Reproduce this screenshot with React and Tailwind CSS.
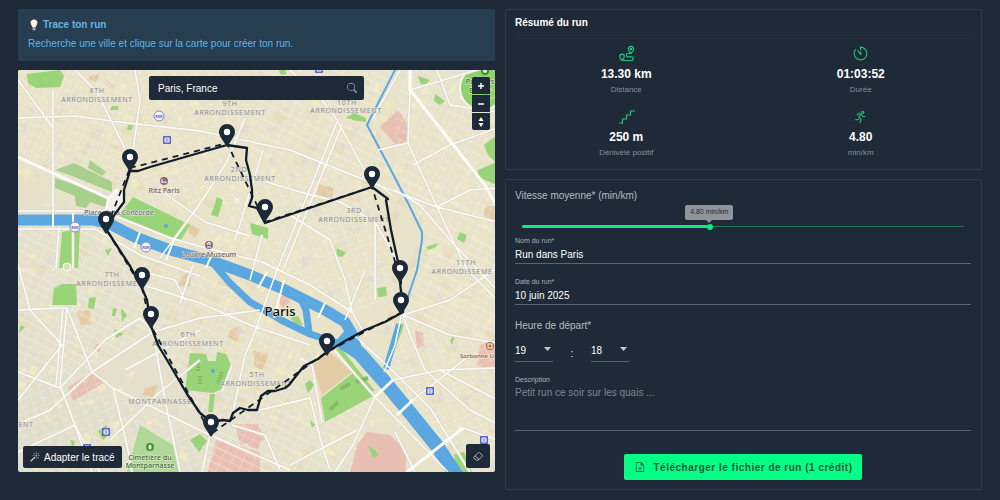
import { useState } from "react"
import { BsEraser, BsMagic, BsSearch } from "react-icons/bs"
import { IoTimerOutline } from "react-icons/io5"
import { LiaRunningSolid } from "react-icons/lia"
import { PiFileArrowDown } from "react-icons/pi"

const ROADS = [
    "M18 157L110 199", "M18 118L75 116L120 122L200 131L290 150L370 182L437 207L497 222", "M53 90V226", "M75 70L97 92L128 155L131 172",
    "M18 80L53 128L53 160", "M135 70L140 100L131 165", "M73 224V268", "M59 226L56 268", "M18 211H108", "M18 229H95L140 255L200 276",
    "M110 214L170 238L210 249L262 262L310 285L352 312L366 336", "M160 258L197 208L227 162L245 118", "M160 190L205 222L250 236",
    "M337 122L277 270L250 345", "M342 125L283 270", "M337 120L367 175L392 195", "M337 120L322 100L290 70", "M263 150L235 240",
    "M408 143L437 207L467 270L497 300", "M410 90L497 64", "M410 90L408 143L378 150", "M413 165L450 145L497 128",
    "M437 207L470 190L497 188", "M395 190L420 205L450 240L497 290", "M250 177L300 192L340 202L375 222L398 262", "M290 215L330 240L345 280L352 312",
    "M375 222L375 300", "M18 310L60 308L67 308", "M67 308L60 385", "M63 308L56 385", "M67 308L92 372L113 388L210 435L290 470", "M18 372L60 388L105 340L140 318L153 332",
    "M18 265L30 310L62 345L18 400", "M92 372L153 332L200 318L260 310", "M92 372L50 410L18 424", "M60 385L92 472", "M113 388L127 445L132 472",
    "M153 332L165 400L180 472", "M143 285L200 303L250 325L310 345", "M135 270L175 280L185 300", "M110 440L160 392L200 360", "M18 452L75 425L100 472",
    "M233 412L245 355L258 325", "M210 435L202 472", "M232 365L222 392", "M260 410L310 398L322 445L330 470", "M290 465L357 430", "M322 422L312 365L300 358",
    "M280 470L265 435L232 425", "M334 350L375 397L405 428L448 472", "M355 336L395 373L430 408L470 472", "M375 397L353 445L335 472",
    "M375 397L393 380L440 370L497 368", "M407 472L463 428L497 440", "M397 415L413 400L470 355", "M403 315L450 335L497 343", "M403 315L410 335L425 370L470 410L497 424",
    "M403 315L450 300L497 268", "M402 312L395 345L384 372", "M440 370L497 400", "M395 432L415 472", "M365 270L345 320", "M250 280L262 235",
    "M180 303L193 265", "M125 370L200 330", "M400 70L372 120", "M437 70L450 105L497 112",
]

// [clip polygon, pattern id]
const DISTRICTS = [
    ["18,70 140,70 131,170 110,199 18,157", "gridA"], ["140,70 260,70 245,118 197,208 160,250 131,190", "gridB"],
    ["260,70 400,70 367,125 392,172 370,182 245,150", "gridC"], ["245,150 370,182 395,300 352,312 262,262 200,240", "gridB"],
    ["400,70 497,70 497,222 437,207 392,172", "gridA"], ["392,172 497,222 497,343 403,315 422,235", "gridC"],
    ["18,229 95,229 142,270 160,330 92,372 18,372", "gridC"], ["142,260 210,275 310,345 300,420 211,435 150,330", "gridA"],
    ["18,372 92,372 210,435 202,472 18,472", "gridB"], ["211,435 322,400 375,397 350,472 202,472", "gridC"],
    ["403,315 497,343 497,472 448,472 384,372", "gridB"],
]

const GREENS = [
    "27,74 60,70 64,76 60,87 36,88 28,83", "190,353 206,354 208,361 216,361 217,352 226,354 232,367 223,388 213,393 185,390",
    "133,197 190,225 180,242 118,217", "353,373 375,395 325,422 321,398", "210,394 215,394 213,412 208,412", "62,232 80,228 78,268 59,268",
    "54,288 62,284 76,284 77,305 52,305", "89,298 96,297 94,309 88,308", "217,197 223,200 218,217 211,215", "112,106 118,106 118,110 110,110",
    "128,125 133,125 132,130 127,130", "113,308 117,309 115,316 112,316", "121,308 127,315 122,322", "114,329 124,334 116,338",
    "112,248 108,256 105,250", "377,288 386,287 387,296 378,297", "250,223 268,228 268,239 252,234", "418,76 430,80 425,85 420,83",
    "435,94 445,101 440,105 434,101", "352,112 366,118 366,122 352,120", "460,232 467,235 464,243 457,239", "337,248 346,253 342,257 336,256",
    "484,145 497,135 497,164 488,155", "478,170 497,162 497,185 478,177", "345,118 357,112 358,120", "98,431 106,425 111,433 103,440",
    "454,454 464,452 472,472 457,472", "368,446 375,450 379,455 373,458", "305,384 310,380 314,385 308,393", "190,440 200,434 207,441 199,452",
    "399,322 404,325 392,358 387,367", "426,247 438,243 436,247 428,250", "20,325 25,327 19,333", "450,340 455,335 452,345", "279,70 284,68 287,74 281,75",
    "340,347 375,391 370,391 336,349", "290,318 298,316 303,325 296,324", "205,247 212,248 210,252", "310,420 315,425 312,428", "70,440 75,441 73,448",
]

const SOFT_GREENS = ["55,170 74,163 112,182 112,192 72,176", "55,178 108,196 105,207 90,202 86,208 76,206 75,196 55,188", "90,160 106,172 102,176 88,168"]

const PINKS = [
    "68,387 92,372 105,382 73,401", "380,127 398,110 410,127 406,144 396,145", "367,432 390,435 407,452 405,472 350,472 357,445",
    "480,345 497,338 497,370 477,366", "216,440 260,452 260,472 208,472", "235,424 258,424 265,440 240,445", "415,330 423,333 424,345 417,348",
    "278,298 287,293 290,302 282,308", "95,345 101,343 100,352 94,350", "210,463 222,466 218,472 208,472", "250,432 262,436 258,450 248,446",
]

const TANS = ["313,365 330,352 352,372 322,395", "76,312 91,310 90,325 81,325", "318,184 334,188 331,199 316,194", "229,330 240,326 236,342 228,338", "253,350 269,355 263,370 255,367", "180,278 192,270 190,287 178,286", "90,76 100,74 96,82 88,80", "145,388 158,385 153,397 143,395", "485,207 497,205 495,225 484,215", "190,224 200,230 195,238 188,232"]

const LABELS = [
    [97, 93, "8TH"], [97, 102, "ARRONDISSEMENT"], [230, 106, "9TH"], [230, 115, "ARRONDISSEMENT"], [239, 172, "2ND"], [240, 181, "ARRONDISSEMENT"],
    [347, 105, "10TH"], [346, 113, "ARRONDISSEMENT"], [354, 213, "3RD"], [354, 222, "ARRONDISSEMENT"], [466, 265, "11TH"], [462, 274, "ARRONDISSEME"],
    [112, 277, "7TH"], [112, 286, "ARRONDISSEMENT"], [188, 337, "6TH"], [188, 346, "ARRONDISSEMENT"], [257, 377, "5TH"], [256, 386, "ARRONDISSEMENT"],
    [160, 404, "MONTPARNASSE"], [26, 427, "ENT"],
]

const ROUTE = "M130 171L138 171L150 167L185 157L227 145L247 148L246 160L250 175L252 190L252 198L249 206L257 208L265 223L372 187L388 199L386 200L391 230L398 262L400 282L403 312L385 322L365 330L345 341L327 352L318 359L310 363L304 366L296 376L289 385L285 388L275 391L268 391L261 396L257 410L248 410L240 408L233 413L230 421L223 420L211 422L200 413L187 394L170 365L158 345L151 326L147 300L142 288L130 266L106 229L115 214L124 202L124 190L130 171"
const DIRECT = "M130 168L227 143L265 222L372 187L401 281L402 312L327 352L211 434L151 326L142 288L106 229L130 168"
const PINS = [[227, 132], [130, 157], [265, 207], [372, 174], [106, 219], [400, 268], [401, 300], [327, 341], [142, 275], [151, 314], [211, 422]]
const RER = [[159, 116], [75, 227], [146, 247]]
const METRO = [[167, 140], [319, 69], [106, 432], [87, 448], [430, 391], [484, 440]]

// Small building blocks spread over the districts, always the same ones
const BLOCKS = Array.from({ length: 620 }, (_, i) => ({
    x: 18 + ((i * 137.5) % 477),
    y: 70 + ((i * 71.3 + (i % 7) * 19) % 402),
    w: 4 + (i % 5) * 2,
    h: 3 + (i % 4) * 2,
    r: (i * 31) % 60,
    fill: ["#f1eac6", "#e0dcd0", "#efe7c3", "#e6e2d0", "#e7ddbe"][i % 5],
}))

const ParisMap = () => (
    <svg viewBox="18 70 477 402" preserveAspectRatio="xMidYMid slice" className="block h-full w-full" role="img" aria-label="Carte de Paris">
        <defs>
            <pattern id="gridA" width="13" height="9" patternUnits="userSpaceOnUse" patternTransform="rotate(24)">
                <path d="M0 0H13M0 0V9M6 0V4" stroke="#f8f7f0" strokeWidth="1" fill="none" />
            </pattern>
            <pattern id="gridB" width="11" height="14" patternUnits="userSpaceOnUse" patternTransform="rotate(-22)">
                <path d="M0 0H11M0 0V14M0 8H5" stroke="#f8f7f0" strokeWidth="1" fill="none" />
            </pattern>
            <pattern id="gridC" width="15" height="10" patternUnits="userSpaceOnUse" patternTransform="rotate(-64)">
                <path d="M0 0H15M0 0V10M8 0V10" stroke="#f8f7f0" strokeWidth="1" fill="none" />
            </pattern>
            <linearGradient id="land" x1="0" y1="1" x2="1" y2="0">
                <stop offset="0" stopColor="#e0ddce" />
                <stop offset="0.5" stopColor="#e9e3c9" />
                <stop offset="1" stopColor="#e7e2ca" />
            </linearGradient>
        </defs>
        <rect x="18" y="70" width="477" height="402" fill="url(#land)" />
        {BLOCKS.map((b, i) => (
            <rect key={i} x={b.x} y={b.y} width={b.w} height={b.h} fill={b.fill} transform={`rotate(${b.r} ${b.x} ${b.y})`} />
        ))}
        {TANS.map((p) => <polygon key={p} points={p} fill="#e3cba6" />)}
        {PINKS.map((p) => <polygon key={p} points={p} fill="#e8bfb2" />)}
        {DISTRICTS.map(([points, id]) => <polygon key={points} points={points} fill={`url(#${id})`} opacity="0.55" />)}
        {SOFT_GREENS.map((p) => <polygon key={p} points={p} fill="#a8cf8b" />)}
        {GREENS.map((p) => <polygon key={p} points={p} fill="#99d479" />)}
        <polygon points="140,425 173,445 181,472 127,472" fill="#b1d898" />
        <circle cx="482" cy="88" r="23" fill="#f7f5ec" />
        <circle cx="482" cy="88" r="21" fill="#8fd26b" />
        <path d="M466 78C476 90 488 84 495 92M474 104C480 96 488 100 495 97" stroke="#c9e6b0" fill="none" />
        <circle cx="485" cy="92" r="4" fill="#6fc08b" />
        <path d="M340 389L350 384M356 382L368 378M330 410L338 402" stroke="#83bd66" strokeWidth="4" />
        <path d="M198 363V372M200 376V384M222 372L218 384" stroke="#83bd66" strokeWidth="4" strokeDasharray="2 1" />
        <circle cx="213" cy="371" r="2" fill="#5da6d8" />
        <circle cx="166" cy="226" r="2" fill="#5da6d8" />
        <circle cx="136" cy="212" r="2" fill="#5da6d8" />

        <path d={ROADS.join("")} stroke="#dedacb" strokeWidth="3" fill="none" strokeLinejoin="round" />
        <g fill="none" stroke="#5ba7e0" strokeLinejoin="round">
            <path d="M14 220H92L110 224L135 237L170 250L212 261L250 275L283 289L303 299L325 310L345 322L352 334L356 348" strokeWidth="11" />
            <path d="M212 262L230 283L250 302L283 321L310 334L337 343L356 355" strokeWidth="7" />
            <path d="M300 297L306 310L309 332" strokeWidth="7" />
            <path d="M340 336L360 354L383 380L407 409L437 446L457 476" strokeWidth="14" />
            <path d="M396 68L367 125L392 172L409 205L422 232L422 240L417 270L403 312" strokeWidth="2" />
            <path d="M399 324L386 369" strokeWidth="6" />
        </g>
        <path d={ROADS.join("")} stroke="#fdfcf8" strokeWidth="1.5" fill="none" strokeLinejoin="round" />
        <path d="M410 66V90L485 185L497 207M18 157L110 199M375 397L393 380M397 415L413 400M407 472L463 428" stroke="#fdfcf8" strokeWidth="3" fill="none" />
        <path d="M53 213V228M73 213V228M140 232L134 248M174 240L166 260M213 252L206 268M267 272L258 288M284 280L274 318M325 303L318 318" stroke="#fdfcf8" strokeWidth="2" />
        <path d="M108 199L116 190L124 196L118 214L106 211Z" fill="#f3f1e8" stroke="#fdfcf8" strokeWidth="2" />
        <circle cx="237" cy="201" r="2" fill="#eee9d3" stroke="#fdfcf8" />
        <circle cx="67" cy="267" r="4" fill="#d5e6ba" stroke="#fdfcf8" />

        <g fontFamily="'Open Sans', sans-serif" fontSize="7" textAnchor="middle" fill="#7f8598" className="tracking-widest">
            {LABELS.map(([x, y, text]) => (
                <text key={`${x}-${y}`} x={x} y={y} stroke="#ece7d2" strokeWidth="1" paintOrder="stroke">{text}</text>
            ))}
        </g>
        <g fontFamily="'Open Sans', sans-serif" fontSize="7" fontWeight="600" textAnchor="middle" stroke="#f3efdf" strokeWidth="1" paintOrder="stroke">
            <text x="119" y="215" fill="#6d6f7c">Place de la Concorde</text>
            <text x="164" y="193" fill="#7c6370">Ritz Paris</text>
            <text x="209" y="257" fill="#75606a">Louvre Museum</text>
            <text x="477" y="358" fontSize="6" fill="#8b5a3c">Sorbonne U</text>
            <text x="150" y="460" fill="#35702b">Cimetière du</text>
            <text x="150" y="468" fill="#35702b">Montparnasse</text>
            <text x="480" y="84" fill="#35702b">Parc des</text>
            <text x="480" y="93" fill="#35702b">Buttes</text>
        </g>
        <circle cx="164" cy="181" r="4" fill="#8a6b78" />
        <path d="M162 179V183M162 182H166V183" stroke="#fff" fill="none" />
        <circle cx="209" cy="245" r="4" fill="#8a6b78" />
        <path d="M207 247H211M207 244H211L209 242Z" stroke="#fff" fill="none" />
        <circle cx="490" cy="346" r="4" fill="#b06a3a" />
        <rect x="488" y="344" width="4" height="4" fill="none" stroke="#fff" />
        <circle cx="150" cy="447" r="4" fill="#3e9434" />
        <ellipse cx="150" cy="447" rx="1.5" ry="2.5" fill="#e9f4e0" />
        <circle cx="485" cy="71" r="4" fill="#3e8a34" />
        <circle cx="485" cy="71" r="2" fill="#e9f4e0" />
        {RER.map(([x, y]) => (
            <g key={x}>
                <circle cx={x} cy={y} r="5" fill="#f4f3fa" stroke="#8088c8" />
                <text x={x} y={y + 2} fontSize="4" fontWeight="700" fontFamily="'Open Sans', sans-serif" textAnchor="middle" fill="#6069b8">RER</text>
            </g>
        ))}
        {METRO.map(([x, y]) => (
            <g key={x}>
                <rect x={x - 4} y={y - 4} width="8" height="8" rx="1" fill="#5a64c4" />
                <path d={`M${x - 2} ${y + 2}V${y - 2}H${x + 2}V${y + 2}ZM${x - 2} ${y}H${x + 2}`} stroke="#fff" fill="none" />
            </g>
        ))}
        <text x="280" y="316" fontSize="13" fontWeight="600" fontFamily="'Open Sans', sans-serif" textAnchor="middle" fill="#111" stroke="#f3efdf" strokeWidth="1" paintOrder="stroke">Paris</text>

        <path d={DIRECT} stroke="#101d29" strokeWidth="1.8" strokeDasharray="6 5" fill="none" />
        <path d={ROUTE} stroke="#101d29" strokeWidth="2.3" fill="none" strokeLinejoin="round" />
        {PINS.map(([x, y]) => (
            <g key={`${x}-${y}`} transform={`translate(${x} ${y})`}>
                <path d="M0 -8A8 8 0 0 1 8 0C8 5 3 9 1 14Q0 15 -1 14C-3 9 -8 5 -8 0A8 8 0 0 1 0 -8Z" fill="#1c2938" />
                <circle r="3.200" fill="#fff" />
            </g>
        ))}
    </svg>
)

const RouteIcon = ({ className }) => (
    <svg viewBox="-1 -1 17 17" fill="none" stroke="currentColor" strokeWidth="1.2" strokeLinejoin="round" className={className}>
        <path d="M3 14.500C1.500 13 0.700 12 0.700 10.500a2.300 2.300 0 0 1 4.600 0C5.300 12 4.500 13 3 14.500H12.500a1.800 1.800 0 0 0 0-3.600H9a1.700 1.700 0 0 1 0-3.400H12C10.200 5.800 9.400 4.500 9.400 3a2.600 2.600 0 0 1 5.200 0C14.600 4.500 13.800 5.800 12 7.500" />
        <circle cx="12" cy="3" r="0.600" />
    </svg>
)

const StepsIcon = ({ className }) => (
    <svg viewBox="0 0 17 17" fill="none" stroke="currentColor" strokeWidth="1.2" className={className}>
        <path d="M1 15H4.500V11H8.500V7H12.500V3H17" />
    </svg>
)

const Stat = ({ icon: Icon, value, label }) => (
    <div className="flex flex-col items-center">
        <Icon className="size-[17px] text-[#20c77a]" />
        <p className="mt-1 text-[12px] leading-4 font-bold text-white">{value}</p>
        <p className="mt-0.5 text-[8px] leading-3 text-[#84909b]">{label}</p>
    </div>
)

const Field = ({ id, label, value, ...rest }) => (
    <div className="mb-[13px]">
        <label htmlFor={id} className="block text-[7px] leading-[10px] text-[#a9b3bc]">{label}</label>
        <input id={id} defaultValue={value} {...rest} className="block h-[18px] w-full border-b border-[#586672] bg-transparent text-[10px] text-white outline-none" />
    </div>
)

const TimeSelect = ({ label, value, count }) => (
    <div className="relative w-[38px] border-b border-[#586672]">
        <select aria-label={label} defaultValue={value} className="block h-[21px] w-full appearance-none bg-transparent text-[10px] text-white outline-none">
            {Array.from({ length: count }, (_, i) => <option key={i} value={i}>{String(i).padStart(2, "0")}</option>)}
        </select>
        <svg viewBox="0 0 7 4" className="pointer-events-none absolute top-[7px] right-[2px] h-1 w-[7px]">
            <path d="M0 0H7L3.500 4Z" fill="#c3cbd2" />
        </svg>
    </div>
)

const MIN = 3
const MAX = 7.25

const App = () => {
    const [speed, setSpeed] = useState(4.8)
    const percent = ((speed - MIN) / (MAX - MIN)) * 100

    return (
        <main className="grid min-h-screen grid-cols-2 items-start gap-[10px] bg-[#1e2a37] px-[18px] py-[9px] font-['Liberation_Sans',Arial,sans-serif] text-[10px] text-white">
            <section>
                <div className="rounded-xs bg-[#273d50] px-[10px] pt-2 pb-[9px] text-[#62b5e6]">
                    <h1 className="flex items-center gap-[3px] leading-4 font-bold">
                        <svg viewBox="0 0 12 14" className="h-3 w-3">
                            <path d="M6 0.500C3.500 0.500 2 2.300 2 4.500C2 6.700 3.800 7.800 4 10H8C8.200 7.800 10 6.700 10 4.500C10 2.300 8.500 0.500 6 0.500Z" fill="#fdf6e2" />
                            <path d="M4.200 10.500H7.800V12L7 13.500H5L4.200 12Z" fill="#9aa6ad" />
                        </svg>
                        Trace ton run
                    </h1>
                    <p className="mt-[3px] leading-4">Recherche une ville et clique sur la carte pour créer ton run.</p>
                </div>

                <div className="relative mt-[9px] aspect-[477/402] overflow-hidden rounded-xs">
                    <ParisMap />
                    <div className="absolute top-[6px] left-[131px] flex h-6 w-[45%] items-center rounded-xs bg-[#1e2a37] pr-[7px] pl-[9px]">
                        <input aria-label="Ville" defaultValue="Paris, France" className="min-w-0 flex-1 bg-transparent text-[10px] outline-none" />
                        <BsSearch className="size-[10px] text-[#a3adb6]" />
                    </div>
                    <div className="absolute top-[7px] right-[5px] flex w-[18px] flex-col gap-px overflow-hidden rounded-xs">
                        <button aria-label="Zoomer" className="flex h-[17px] items-center justify-center bg-[#1e2a37]">
                            <svg viewBox="0 0 8 8" className="size-2"><path d="M4 1V7M1 4H7" stroke="#fff" strokeWidth="1.5" /></svg>
                        </button>
                        <button aria-label="Dézoomer" className="flex h-[17px] items-center justify-center bg-[#1e2a37]">
                            <svg viewBox="0 0 8 8" className="size-2"><path d="M1 4H7" stroke="#fff" strokeWidth="1.5" /></svg>
                        </button>
                        <button aria-label="Orienter au nord" className="flex h-[17px] items-center justify-center bg-[#1e2a37]">
                            <svg viewBox="0 0 8 12" className="h-3 w-2"><path d="M4 1L6.500 5H1.500ZM4 11L6.500 7H1.500Z" fill="#fff" /></svg>
                        </button>
                    </div>
                    <button className="absolute bottom-1 left-[5px] flex h-[22px] items-center gap-1 rounded-xs bg-[#1e2a37] px-[7px]">
                        <BsMagic className="size-[10px] text-[#c8d0d6]" />
                        Adapter le tracé
                    </button>
                    <button aria-label="Effacer" className="absolute right-[5px] bottom-1 flex h-6 w-6 items-center justify-center rounded-xs bg-[#1e2a37]">
                        <BsEraser className="size-[10px] text-[#c8d0d6]" />
                    </button>
                </div>
            </section>

            <section className="flex flex-col gap-[9px]">
                <div className="rounded-xs border border-[#303d4a] px-[3px] pt-[5px] pb-[10px]">
                    <h2 className="mx-[6px] border-b border-[#22303d] pb-1 leading-4 font-bold">Résumé du run</h2>
                    <div className="mt-[9px] grid grid-cols-2 gap-y-3">
                        <Stat icon={RouteIcon} value="13.30 km" label="Distance" />
                        <Stat icon={IoTimerOutline} value="01:03:52" label="Durée" />
                        <Stat icon={StepsIcon} value="250 m" label="Dénivelé positif" />
                        <Stat icon={LiaRunningSolid} value="4.80" label="min/km" />
                    </div>
                </div>

                <form className="rounded-xs border border-[#303d4a] pt-2 pr-[10px] pb-[9px] pl-[9px]" onSubmit={(e) => e.preventDefault()}>
                    <label htmlFor="speed" className="block leading-4 text-[#b4bdc5]">Vitesse moyenne* (min/km)</label>
                    <div className="relative mx-[7px] h-8 pt-[19px]">
                        <div className="absolute top-[22px] right-0 left-0 h-px bg-[#1f7a55]" />
                        <div className="absolute top-[21px] left-0 h-[3px] rounded-full bg-[#12e880]" style={{ width: `${percent}%` }} />
                        <input id="speed" type="range" min={MIN} max={MAX} step="0.05" value={speed} onChange={(e) => setSpeed(Number(e.target.value))}
                            className="relative block h-[7px] w-full appearance-none bg-transparent outline-none [&::-webkit-slider-thumb]:size-[6px] [&::-webkit-slider-thumb]:appearance-none [&::-webkit-slider-thumb]:rounded-full [&::-webkit-slider-thumb]:bg-[#12e880]" />
                        <output htmlFor="speed" className="absolute top-px flex h-[15px] w-12 -translate-x-1/2 items-center justify-center rounded-xs bg-[#8f9499] text-[7px] text-[#1e2a37]" style={{ left: `${percent}%` }}>
                            {speed.toFixed(2)} min/km
                            <span className="absolute top-full border-x-3 border-t-3 border-x-transparent border-t-[#8f9499]" />
                        </output>
                    </div>
                    <Field id="name" label="Nom du run*" value="Run dans Paris" />
                    <Field id="date" label="Date du run*" value="10 juin 2025" />
                    <fieldset>
                        <legend className="leading-4 text-[#b4bdc5]">Heure de départ*</legend>
                        <div className="mt-[6px] flex items-end">
                            <TimeSelect label="Heures" value={19} count={24} />
                            <span className="w-[38px] text-center leading-4">:</span>
                            <TimeSelect label="Minutes" value={18} count={60} />
                        </div>
                    </fieldset>
                    <label htmlFor="description" className="mt-[13px] block text-[7px] leading-[10px] text-[#a9b3bc]">Description</label>
                    <textarea id="description" placeholder="Petit run ce soir sur les quais ..." className="block h-[46px] w-full resize-none border-b border-[#586672] bg-transparent leading-4 text-white outline-none placeholder:text-[#7b8792]" />
                    <button type="submit" className="mx-auto mt-[23px] flex h-[26px] items-center gap-2 rounded-xs bg-[#05ff85] px-[10px] font-bold tracking-wider text-[#17593f]">
                        <PiFileArrowDown className="size-3" />
                        Télécharger le fichier de run (1 crédit)
                    </button>
                </form>
            </section>
        </main>
    )
}

export default App
